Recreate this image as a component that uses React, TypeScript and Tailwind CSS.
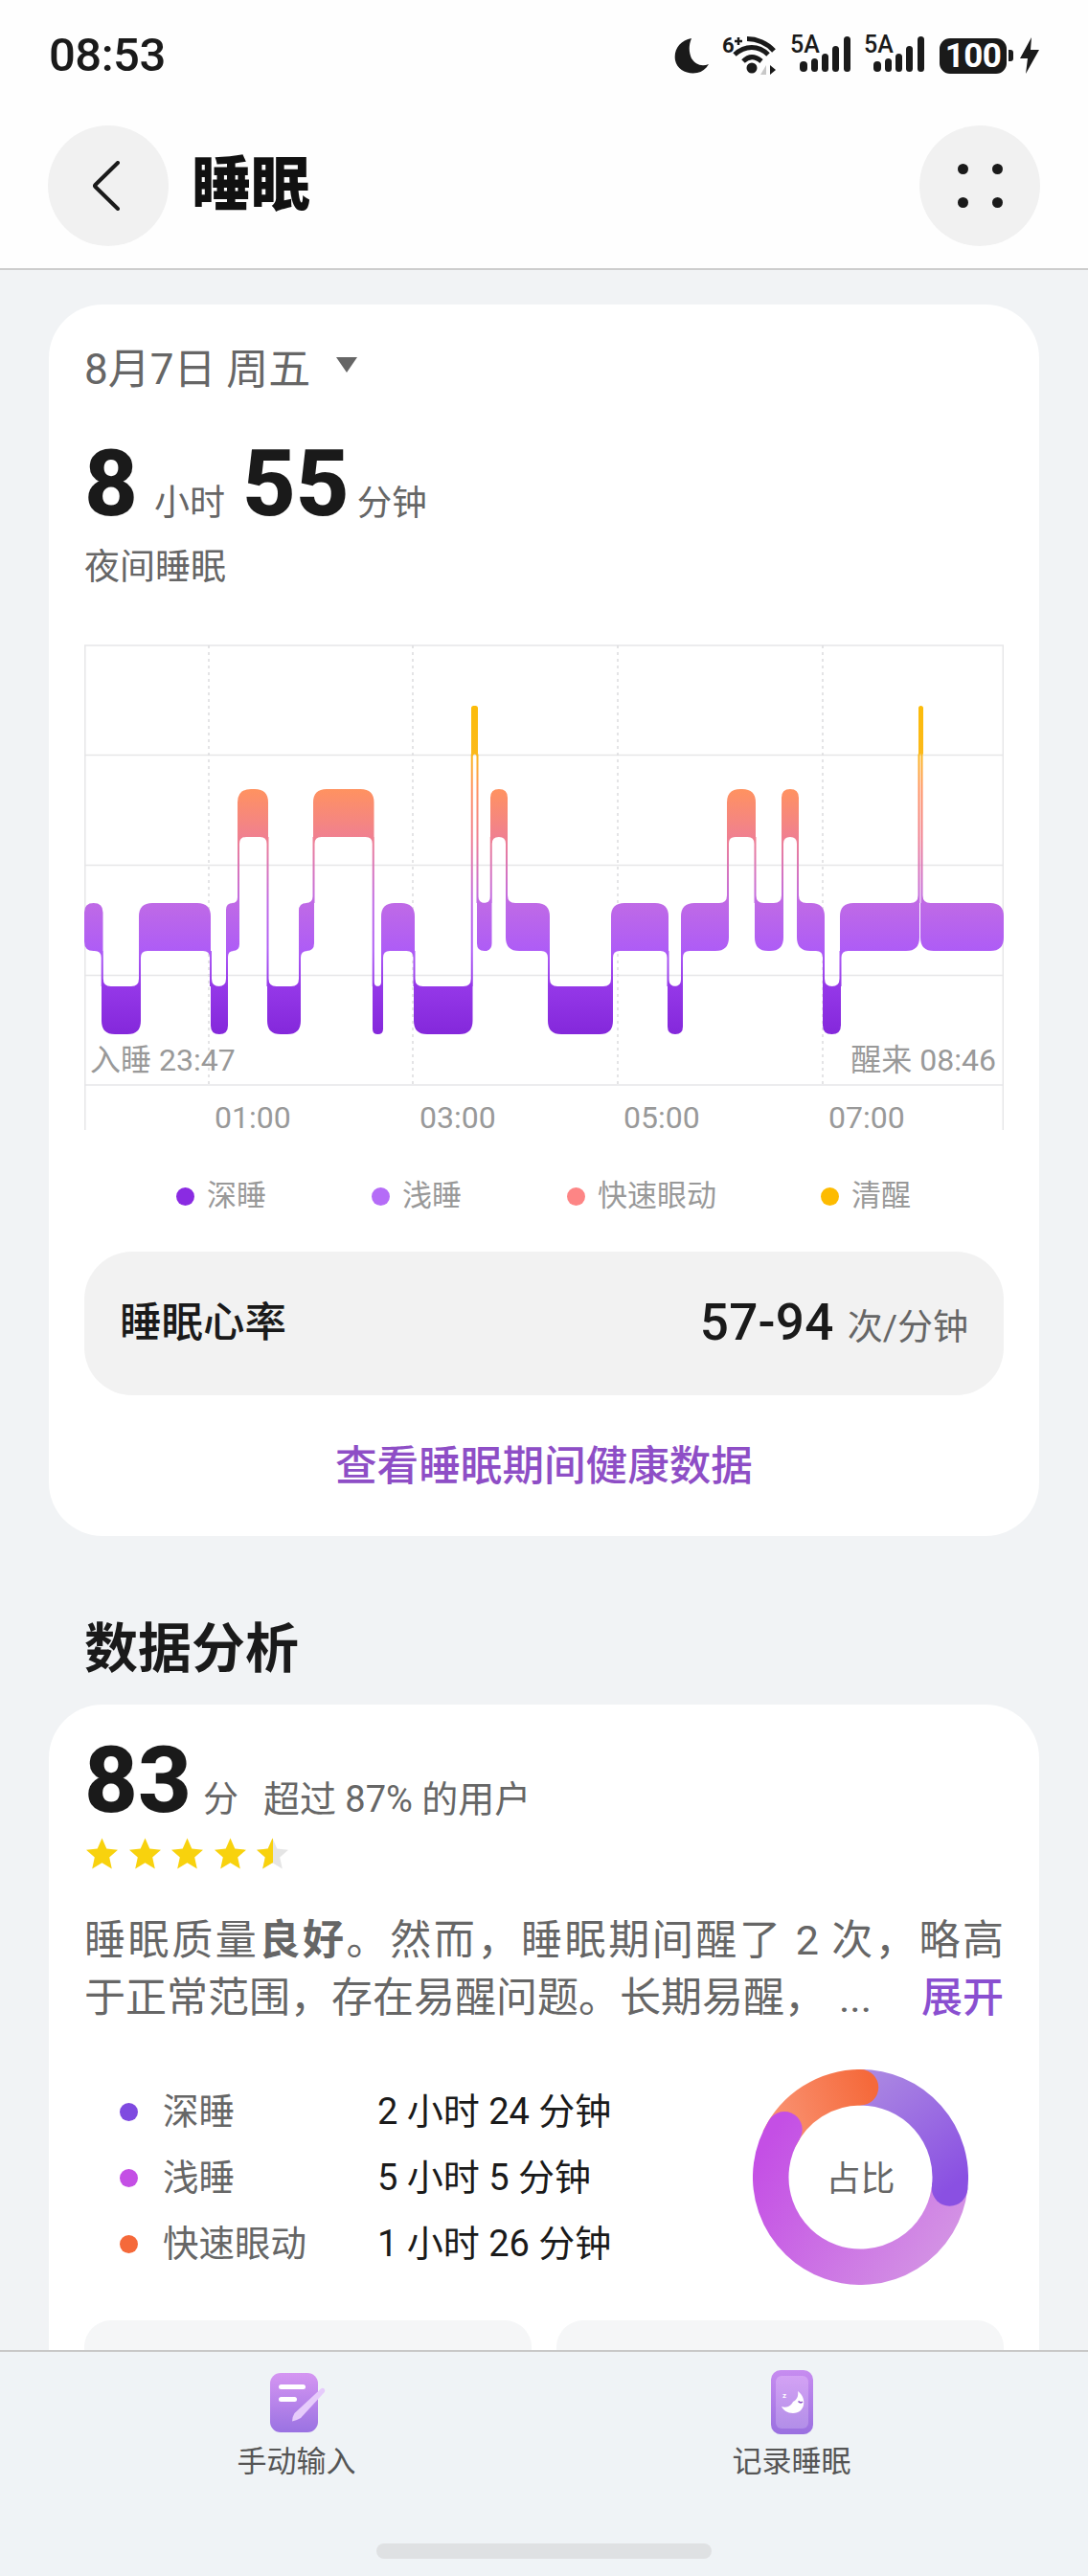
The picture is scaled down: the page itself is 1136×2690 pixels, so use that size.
import React from 'react';

type Level = 'awake' | 'rem' | 'light' | 'deep';

const LEVELS: Record<Level, { top: number; bottom: number; rank: number }> = {
  awake: { top: 737, bottom: 787.5, rank: 3 },
  rem: { top: 824, bottom: 874, rank: 2 },
  light: { top: 943, bottom: 993, rank: 1 },
  deep: { top: 1030, bottom: 1080, rank: 0 },
};

const SEGMENTS: [Level, number, number][] = [
  ['light', 88, 107.5],
  ['deep', 106, 147],
  ['light', 145, 220],
  ['deep', 220, 238],
  ['light', 236, 250],
  ['rem', 248, 280],
  ['deep', 279, 314],
  ['light', 312, 328],
  ['rem', 327, 390.5],
  ['deep', 389, 400],
  ['light', 398, 433],
  ['deep', 432, 493.5],
  ['awake', 492, 499],
  ['light', 498, 513.5],
  ['rem', 512, 530],
  ['light', 528, 574],
  ['deep', 572, 640],
  ['light', 638, 698],
  ['deep', 697, 713],
  ['light', 711, 761],
  ['rem', 759, 789],
  ['light', 788, 818],
  ['rem', 816, 834],
  ['light', 832, 861],
  ['deep', 859, 878],
  ['light', 877, 960],
  ['awake', 959, 964],
  ['light', 961, 1048],
];

function segmentPath(i: number): string {
  const [level, x1, x2] = SEGMENTS[i];
  const { top, bottom, rank } = LEVELS[level];
  const prev = SEGMENTS[i - 1];
  const next = SEGMENTS[i + 1];
  const prevRank = prev ? LEVELS[prev[0]].rank : -1;
  const nextRank = next ? LEVELS[next[0]].rank : -1;
  const r = Math.min(level === 'awake' ? 2.5 : 14, (x2 - x1) / 2);
  const tl = prev && prevRank > rank ? 0 : r;
  const bl = prev && prevRank < rank ? 0 : r;
  const tr = next && nextRank > rank ? 0 : r;
  const br = next && nextRank < rank ? 0 : r;
  return [
    `M${x1 + tl} ${top}`,
    `L${x2 - tr} ${top}`,
    `Q${x2} ${top} ${x2} ${top + tr}`,
    `L${x2} ${bottom - br}`,
    `Q${x2} ${bottom} ${x2 - br} ${bottom}`,
    `L${x1 + bl} ${bottom}`,
    `Q${x1} ${bottom} ${x1} ${bottom - bl}`,
    `L${x1} ${top + tl}`,
    `Q${x1} ${top} ${x1 + tl} ${top}Z`,
  ].join('');
}

function connectorPath(i: number): string {
  const a = SEGMENTS[i];
  const b = SEGMENTS[i + 1];
  const la = LEVELS[a[0]];
  const lb = LEVELS[b[0]];
  const c = (b[1] + a[2]) / 2;
  const aUpper = la.rank > lb.rank;
  const upper = aUpper ? la : lb;
  const lower = aUpper ? lb : la;
  const upperW = aUpper ? a[2] - a[1] : b[2] - b[1];
  const lowerW = aUpper ? b[2] - b[1] : a[2] - a[1];
  const fu = Math.min(7, upperW / 2 - 1);
  const fl = Math.min(8, lowerW / 2 - 1);
  const dir = aUpper ? 1 : -1; // the upper band lies on this side's opposite
  const xu = c - dir;
  const xl = c + dir;
  let d = `M${c - 1} ${upper.bottom}L${c + 1} ${upper.bottom}L${c + 1} ${lower.top}L${c - 1} ${lower.top}Z`;
  d += `M${xu - dir * fu} ${upper.bottom}L${xu} ${upper.bottom}L${xu} ${upper.bottom + fu}Q${xu} ${upper.bottom} ${xu - dir * fu} ${upper.bottom}Z`;
  d += `M${xl} ${lower.top - fl}L${xl} ${lower.top}L${xl + dir * fl} ${lower.top}Q${xl} ${lower.top} ${xl} ${lower.top - fl}Z`;
  return d;
}

function SleepChart() {
  const h = [674, 788.5, 903.5, 1018.5, 1133];
  const v = [218, 431, 645, 859];
  let d = '';
  SEGMENTS.forEach((_, i) => {
    d += segmentPath(i);
    if (i < SEGMENTS.length - 1) d += connectorPath(i);
  });
  return (
    <div className="relative mt-[55px] h-[507px] w-full">
      <svg viewBox="88 673 960 507" className="block h-[507px] w-[960px]">
        <defs>
          <linearGradient id="stage" gradientUnits="userSpaceOnUse" x1="0" y1="737" x2="0" y2="1080">
            <stop offset="0" stopColor="#fcbc0a" />
            <stop offset="0.146" stopColor="#fbb91a" />
            <stop offset="0.254" stopColor="#ff9260" />
            <stop offset="0.4" stopColor="#f08090" />
            <stop offset="0.601" stopColor="#bf6ae6" />
            <stop offset="0.746" stopColor="#ae5cf6" />
            <stop offset="0.854" stopColor="#9538e8" />
            <stop offset="1" stopColor="#8428db" />
          </linearGradient>
        </defs>
        {h.map((y) => (
          <line key={y} x1="88" x2="1048" y1={y} y2={y} stroke="#e6e6e8" strokeWidth="1.5" />
        ))}
        <line x1="88.8" x2="88.8" y1="674" y2="1180" stroke="#e6e6e8" strokeWidth="1.5" />
        <line x1="1047.3" x2="1047.3" y1="674" y2="1180" stroke="#e6e6e8" strokeWidth="1.5" />
        {v.map((x) => (
          <line key={x} x1={x} x2={x} y1="674" y2="1133" stroke="#dcdcde" strokeWidth="1.5" strokeDasharray="3 4" />
        ))}
        <path d={d} fill="url(#stage)" />
      </svg>
      <span className="absolute left-[6px] top-[414px] text-[32px] leading-[40px] text-[#999]">入睡 23:47</span>
      <span className="absolute right-[8px] top-[414px] text-[32px] leading-[40px] text-[#999]">醒来 08:46</span>
      <span className="absolute left-[136px] top-[474px] text-[32px] leading-[40px] text-[#999]">01:00</span>
      <span className="absolute left-[350px] top-[474px] text-[32px] leading-[40px] text-[#999]">03:00</span>
      <span className="absolute left-[563px] top-[474px] text-[32px] leading-[40px] text-[#999]">05:00</span>
      <span className="absolute left-[777px] top-[474px] text-[32px] leading-[40px] text-[#999]">07:00</span>
    </div>
  );
}

function Signal() {
  return (
    <svg viewBox="0 0 63 40" className="h-[40px] w-[63px] overflow-visible">
      <text x="0" y="17" fontSize="25" fontWeight="500" fill="#1a1a1a" fontFamily="Roboto, sans-serif">5A</text>
      <rect x="10" y="26" width="8" height="11" rx="4" fill="#1a1a1a" />
      <rect x="22" y="23" width="7" height="14" rx="3.5" fill="#1a1a1a" />
      <rect x="33" y="18" width="7" height="19" rx="3.5" fill="#1a1a1a" />
      <rect x="44" y="10" width="7" height="27" rx="3.5" fill="#1a1a1a" />
      <rect x="56" y="0" width="7" height="37" rx="3.5" fill="#1a1a1a" />
    </svg>
  );
}

function Wifi() {
  return (
    <svg viewBox="0 0 57 42" className="h-[42px] w-[57px] overflow-visible">
      <text x="0" y="18" fontSize="22" fontWeight="700" fill="#1a1a1a" fontFamily="Roboto, sans-serif">6</text>
      <path d="M13 6h8M17 2v8" stroke="#1a1a1a" strokeWidth="2.5" />
      <path d="M26 3.5C36 3.5 47 8 54 16" fill="none" stroke="#1a1a1a" strokeWidth="5" />
      <path d="M13 20C24 10 38 10 48 20" fill="none" stroke="#1a1a1a" strokeWidth="5" />
      <path d="M22 27C28 21 34 21 41 27" fill="none" stroke="#1a1a1a" strokeWidth="5" />
      <circle cx="31" cy="34" r="5.5" fill="#1a1a1a" />
      <path d="M40 41L46 31V41Z" fill="#c8c8c8" />
      <path d="M50 31L56 36L50 41Z" fill="#1a1a1a" />
    </svg>
  );
}

function StatusBar() {
  return (
    <div className="mt-[33px] flex h-[48px] items-center justify-between px-[51px]">
      <span className="text-[49px] font-medium leading-[48px] tracking-[-0.5px] text-[#1a1a1a]">08:53</span>
      <div className="flex items-center">
        <svg viewBox="0 0 36 37" className="h-[37px] w-[36px]">
          <path d="M18 0C6 2-1 12 1 23c2 10 13 15 23 13 5-1 9-4 12-9-8 3-14 0-18-6-3-7-3-14 0-21Z" fill="#1a1a1a" />
        </svg>
        <div className="ml-[14px]"><Wifi /></div>
        <div className="ml-[14px]"><Signal /></div>
        <div className="ml-[14px]"><Signal /></div>
        <div className="ml-[16px] flex h-[37px] w-[70px] items-center justify-center rounded-[11px] bg-[#1a1a1a] text-[35px] font-bold leading-[37px] tracking-[-0.5px] text-white">100</div>
        <div className="ml-[2px] h-[12px] w-[5px] rounded-r-[3px] bg-[#1a1a1a]" />
        <svg viewBox="0 0 20 38" className="ml-[7px] h-[38px] w-[20px]">
          <path d="M12 0L0 22H8L6 38L20 13H11Z" fill="#1a1a1a" />
        </svg>
      </div>
    </div>
  );
}

function Header() {
  return (
    <header className="h-[282px] shrink-0 border-b-2 border-[#cdcdcd] bg-[#fefefe]">
      <div className="h-[1px]" />
      <StatusBar />
      <div className="mt-[49px] flex items-center px-[50px]">
        <button className="flex h-[126px] w-[126px] items-center justify-center rounded-full bg-[#f1f1f1]">
          <svg viewBox="0 0 30 52" className="mr-[4px] h-[52px] w-[30px]">
            <path d="M27 2L3.5 25Q2.5 26 3.5 27L27 50" fill="none" stroke="#1a1a1a" strokeWidth="4" strokeLinecap="round" />
          </svg>
        </button>
        <h1 className="ml-[24px] text-[62px] font-black leading-[70px] text-[#111]">睡眠</h1>
        <button className="ml-auto flex h-[126px] w-[126px] items-center justify-center rounded-full bg-[#f1f1f1]">
          <div className="grid grid-cols-2 gap-x-[25px] gap-y-[24px]">
            <span className="h-[11px] w-[11px] rounded-full bg-[#1a1a1a]" />
            <span className="h-[11px] w-[11px] rounded-full bg-[#1a1a1a]" />
            <span className="h-[11px] w-[11px] rounded-full bg-[#1a1a1a]" />
            <span className="h-[11px] w-[11px] rounded-full bg-[#1a1a1a]" />
          </div>
        </button>
      </div>
    </header>
  );
}

function LegendItem({ dot, label, className }: { dot: string; label: string; className: string }) {
  return (
    <div className={`absolute top-0 flex h-[40px] items-center ${className}`}>
      <span className={`h-[19px] w-[19px] rounded-full ${dot}`} />
      <span className="ml-[13px] text-[31px] leading-[40px] text-[#999]">{label}</span>
    </div>
  );
}

function SleepCard() {
  return (
    <section className="rounded-[56px] bg-white px-[37px] pb-[47px] pt-[43px]">
      <div className="flex h-[50px] items-center">
        <span className="text-[44px] leading-[50px] text-[#666]">8月7日 周五</span>
        <svg viewBox="0 0 24 16" className="ml-[26px] mt-[-10px] h-[16px] w-[24px]">
          <path d="M1 0H23L12 16Z" fill="#666" />
        </svg>
      </div>
      <div className="mt-[44px] flex items-baseline">
        <span className="text-[97px] font-extrabold leading-[100px] text-[#1a1a1a]">8</span>
        <span className="ml-[17px] text-[37px] text-[#666]">小时</span>
        <span className="ml-[18px] text-[97px] font-extrabold leading-[100px] text-[#1a1a1a]">55</span>
        <span className="ml-[8px] text-[36.5px] text-[#666]">分钟</span>
      </div>
      <p className="mt-[13px] text-[37px] leading-[50px] text-[#666]">夜间睡眠</p>
      <SleepChart />
      {/* legend items sit at uneven offsets in the reference */}
      <div className="relative mt-[49px] h-[40px]">
        <LegendItem dot="bg-[#8a2be2]" label="深睡" className="left-[96px]" />
        <LegendItem dot="bg-[#b56cf7]" label="浅睡" className="left-[300px]" />
        <LegendItem dot="bg-[#fd8585]" label="快速眼动" className="left-[504px]" />
        <LegendItem dot="bg-[#fdbb00]" label="清醒" className="left-[769px]" />
      </div>
      <div className="mt-[38px] flex h-[150px] items-center justify-between rounded-[50px] bg-[#f2f2f2] pl-[37px] pr-[37px]">
        <span className="text-[43.5px] font-medium text-[#1a1a1a]">睡眠心率</span>
        <div className="flex items-baseline">
          <span className="text-[53px] font-medium tracking-[0.3px] text-[#1a1a1a]">57-94</span>
          <span className="ml-[14px] text-[37px] text-[#666]">次/分钟</span>
        </div>
      </div>
      <p className="mt-[50px] text-center text-[43.6px] font-medium leading-[50px] text-[#8e4ec6]">查看睡眠期间健康数据</p>
    </section>
  );
}

function polar(deg: number, r = 93.75) {
  const a = ((deg - 90) * Math.PI) / 180;
  return [112.5 + r * Math.cos(a), 112.5 + r * Math.sin(a)];
}

function arc(from: number, to: number) {
  const [x1, y1] = polar(from);
  const [x2, y2] = polar(to);
  return `M${x1} ${y1}A93.75 93.75 0 ${to - from > 180 ? 1 : 0} 1 ${x2} ${y2}`;
}

function Donut() {
  const [pe, pf] = polar(97);
  const [le, lf] = polar(302);
  const [oe, of2] = polar(360);
  return (
    <div className="relative h-[225px] w-[225px]">
      <svg viewBox="0 0 225 225" className="h-[225px] w-[225px]">
        <defs>
          <linearGradient id="dp" gradientUnits="userSpaceOnUse" x1="115" y1="10" x2="205" y2="125">
            <stop offset="0" stopColor="#ab88e2" />
            <stop offset="1" stopColor="#8a50e2" />
          </linearGradient>
          <linearGradient id="dl" gradientUnits="userSpaceOnUse" x1="215" y1="160" x2="35" y2="45">
            <stop offset="0" stopColor="#d391e4" />
            <stop offset="1" stopColor="#c44fe5" />
          </linearGradient>
          <linearGradient id="do" gradientUnits="userSpaceOnUse" x1="30" y1="50" x2="125" y2="18">
            <stop offset="0" stopColor="#f98f6e" />
            <stop offset="1" stopColor="#f5693a" />
          </linearGradient>
        </defs>
        <path d={arc(295, 360)} fill="none" stroke="url(#do)" strokeWidth="37.5" />
        <path d={arc(97, 302)} fill="none" stroke="url(#dl)" strokeWidth="37.5" />
        <circle cx={le} cy={lf} r="18.75" fill="url(#dl)" />
        <path d={arc(0, 97)} fill="none" stroke="url(#dp)" strokeWidth="37.5" />
        <circle cx={pe} cy={pf} r="18.75" fill="url(#dp)" />
        <circle cx={oe} cy={of2} r="18.75" fill="url(#do)" />
      </svg>
      <span className="absolute inset-0 flex items-center justify-center pt-[4px] text-[36px] text-[#666]">占比</span>
    </div>
  );
}

function Star({ half }: { half?: boolean }) {
  const d = 'M16.5 0.5L21.3 11.5L33 12.7L24.2 20.6L26.8 32.4L16.5 26.3L6.2 32.4L8.8 20.6L0 12.7L11.7 11.5Z';
  if (half) {
    return (
      <svg viewBox="0 0 33 33" className="h-[33px] w-[33px]">
        <path d={d} fill="#e5e5e5" />
        <clipPath id="half-star">
          <rect x="0" y="0" width="17" height="33" />
        </clipPath>
        <path d={d} fill="#f8d20d" clipPath="url(#half-star)" />
      </svg>
    );
  }
  return (
    <svg viewBox="0 0 33 33" className="h-[33px] w-[33px]">
      <path d={d} fill="#f8d20d" />
    </svg>
  );
}

function StageRow({ dot, label, value }: { dot: string; label: string; value: string }) {
  return (
    <div className="flex h-[69px] items-center pl-[37px] pt-[2px]">
      <span className={`h-[19px] w-[19px] rounded-full ${dot}`} />
      <span className="ml-[26px] w-[224px] text-[37.5px] text-[#666]">{label}</span>
      <span className="text-[38px] text-[#1a1a1a]">{value}</span>
    </div>
  );
}

function AnalysisCard() {
  return (
    <section className="mt-[23px] rounded-t-[56px] bg-white px-[37px] pt-[29px]">
      <div className="flex items-baseline">
        <span className="text-[97px] font-extrabold leading-[100px] text-[#1a1a1a]">83</span>
        <span className="ml-[12px] text-[37px] text-[#666]">分</span>
        <span className="ml-[26px] text-[38px] text-[#666]">超过 87% 的用户</span>
      </div>
      <div className="ml-[2px] mt-[10px] flex gap-[11.5px]">
        <Star />
        <Star />
        <Star />
        <Star />
        <Star half />
      </div>
      <div className="mt-[44px] text-[43px] leading-[60px] text-[#666]">
        <p className="text-justify [text-align-last:justify]">
          睡眠质量<b className="font-bold">良好</b>。然而，睡眠期间醒了 2 次，略高
        </p>
        <p className="flex">
          <span>于正常范围，存在易醒问题。长期易醒，</span>
          <span className="ml-[14px]">...</span>
          <span className="ml-auto font-medium text-[#8a4fd0]">展开</span>
        </p>
      </div>
      <div className="mt-[45px] flex items-center justify-between pr-[37px]">
        <div>
          <StageRow dot="bg-[#7f4ae0]" label="深睡" value="2 小时 24 分钟" />
          <StageRow dot="bg-[#c44fe5]" label="浅睡" value="5 小时 5 分钟" />
          <StageRow dot="bg-[#f5693a]" label="快速眼动" value="1 小时 26 分钟" />
        </div>
        <Donut />
      </div>
      <div className="mt-[37px] grid grid-cols-2 gap-[26px]">
        <div className="h-[120px] rounded-t-[28px] bg-[#f5f6f7]" />
        <div className="h-[120px] rounded-t-[28px] bg-[#f5f6f7]" />
      </div>
    </section>
  );
}

function BottomBar() {
  return (
    <footer className="h-[236px] shrink-0 border-t-2 border-[#c8c8c8] bg-[#eff3f6]">
      <div className="grid grid-cols-2 px-[51px]">
        <div className="flex flex-col items-center">
          <svg viewBox="0 0 58 62" className="ml-[3px] mt-[22px] h-[62px] w-[58px]">
            <defs>
              <linearGradient id="note" x1="0" y1="0" x2="0" y2="1">
                <stop offset="0" stopColor="#d596f2" />
                <stop offset="1" stopColor="#9a72e2" />
              </linearGradient>
            </defs>
            <rect x="0" y="0" width="50" height="62" rx="11" fill="url(#note)" />
            <rect x="9" y="12" width="28" height="5" rx="2.5" fill="#fff" />
            <rect x="9" y="25" width="19" height="5" rx="2.5" fill="#fff" />
            <path d="M53 16.5Q55 15 56.5 16.5Q58 18 56.8 20L32 47Q27 50 23 50.5Q23 46 25.5 42Z" fill="#e6cbfb" />
          </svg>
          <span className="mt-[14px] text-[31px] leading-[34px] text-[#555]">手动输入</span>
        </div>
        <div className="flex flex-col items-center">
          <svg viewBox="0 0 44 67" className="mt-[19px] h-[67px] w-[44px]">
            <defs>
              <linearGradient id="ph" x1="0" y1="0" x2="0" y2="1">
                <stop offset="0" stopColor="#c78cf0" />
                <stop offset="1" stopColor="#9a70e0" />
              </linearGradient>
              <linearGradient id="ph2" x1="0" y1="0" x2="0" y2="1">
                <stop offset="0" stopColor="#d3a2f4" />
                <stop offset="1" stopColor="#b28ee8" />
              </linearGradient>
            </defs>
            <rect x="0" y="0" width="44" height="67" rx="10" fill="url(#ph)" />
            <rect x="5" y="6" width="34" height="55" rx="6" fill="url(#ph2)" />
            <path d="M28 22C38 29 36 45 23 45C17 45 13 42 11 38C17 40 21 37 23 33C27 31 29 27 28 22Z" fill="#fff" />
            <path d="M28.5 32.5Q31 35 33 33" fill="none" stroke="#8a50c8" strokeWidth="1.5" />
            <text x="12" y="29" fontSize="8" fontWeight="700" fill="#fff" fontFamily="Roboto, sans-serif">z</text>
          </svg>
          <span className="mt-[12px] text-[31px] leading-[34px] text-[#555]">记录睡眠</span>
        </div>
      </div>
      <div className="mx-auto mt-[68px] h-[16px] w-[350px] rounded-full bg-[#dfe1e3]" />
    </footer>
  );
}

export default function App() {
  return (
    <div className="flex h-[2690px] w-[1136px] flex-col overflow-hidden bg-[#f1f3f5] font-['Roboto','Noto_Sans_CJK_SC',sans-serif]">
      <Header />
      <main className="min-h-0 flex-1 overflow-hidden px-[51px] pt-[36px]">
        <SleepCard />
        <h2 className="ml-[37px] mt-[83px] text-[56px] font-bold leading-[70px] text-[#1a1a1a]">数据分析</h2>
        <AnalysisCard />
      </main>
      <BottomBar />
    </div>
  );
}
